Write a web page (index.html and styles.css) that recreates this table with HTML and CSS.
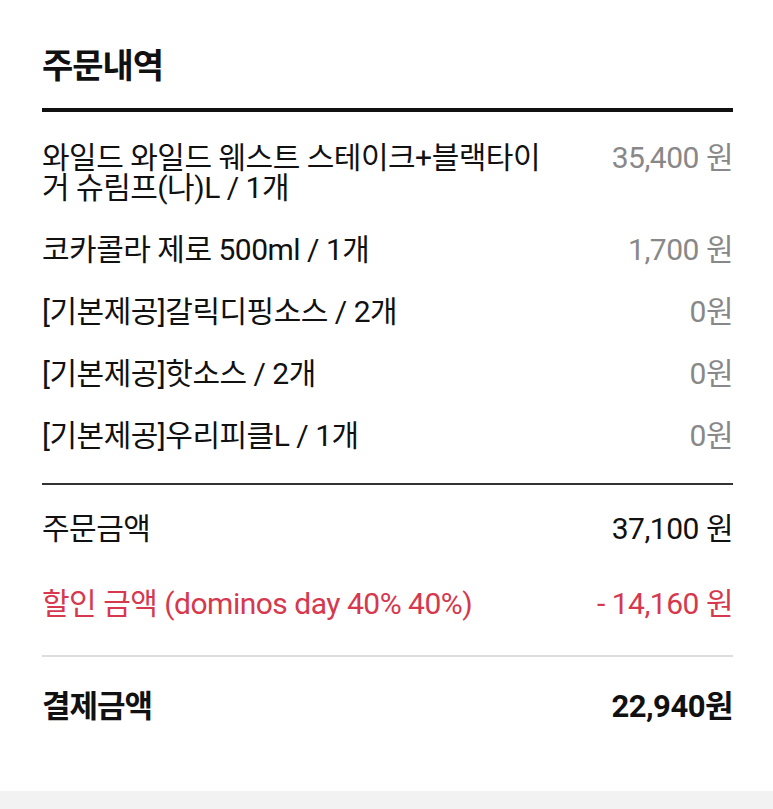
FILE: index.html
```html
<!DOCTYPE html>
<html lang="ko">
<head>
    <meta charset="UTF-8">
    <meta name="viewport" content="width=device-width, initial-scale=1.0">
    <title>주문내역</title>
    <link rel="stylesheet" href="styles.css">
</head>
<body>
    <div class="order">
        <h1 class="order-title">주문내역</h1>

        <ul class="item-list">
            <li class="item">
                <span class="item-name">와일드 와일드 웨스트 스테이크+블랙타이거 슈림프(나)L / 1개</span>
                <span class="item-price">35,400 원</span>
            </li>
            <li class="item">
                <span class="item-name">코카콜라 제로 500ml / 1개</span>
                <span class="item-price">1,700 원</span>
            </li>
            <li class="item">
                <span class="item-name">[기본제공]갈릭디핑소스 / 2개</span>
                <span class="item-price">0원</span>
            </li>
            <li class="item">
                <span class="item-name">[기본제공]핫소스 / 2개</span>
                <span class="item-price">0원</span>
            </li>
            <li class="item">
                <span class="item-name">[기본제공]우리피클L / 1개</span>
                <span class="item-price">0원</span>
            </li>
        </ul>

        <div class="summary">
            <div class="summary-row">
                <span>주문금액</span>
                <span>37,100 원</span>
            </div>
            <div class="summary-row discount">
                <span>할인 금액 (dominos day 40% 40%)</span>
                <span>- 14,160 원</span>
            </div>
        </div>

        <div class="total">
            <span>결제금액</span>
            <span class="total-price">22,940원</span>
        </div>
    </div>
    <div class="bottom-band"></div>
</body>
</html>
```

FILE: styles.css
```css
body {
    margin: 0;
    font-family: Roboto, "Noto Sans CJK KR", sans-serif;
    color: #111;
    background-color: white;
}
.order {
    padding: 0 40px 0 42px;
}
.order-title {
    margin: 0;
    padding-top: 44px;
    padding-bottom: 20px;
    font-size: 34px;
    line-height: 44px;
    font-weight: 700;
    letter-spacing: -1px;
    border-bottom: 4px solid #111;
}
.item-list {
    list-style: none;
    margin: 0;
    padding: 15px 0 0;
    border-bottom: 2px solid #333;
    padding-bottom: 16px;
}
.item {
    display: flex;
    justify-content: space-between;
    align-items: flex-start;
    padding: 16px 0;
    font-size: 30px;
    line-height: 30px;
    letter-spacing: -0.5px;
}
.item-name {
    max-width: 522px;
}
.item-price {
    color: #888;
    white-space: nowrap;
}
.summary {
    padding-top: 3px;
    padding-bottom: 17px;
    border-bottom: 2px solid #ddd;
}
.summary-row {
    display: flex;
    justify-content: space-between;
    align-items: center;
    height: 75px;
    font-size: 30px;
    letter-spacing: -0.5px;
}
.discount {
    color: #d6384e;
}
.total {
    display: flex;
    justify-content: space-between;
    align-items: center;
    padding: 30px 0 64px;
    line-height: 40px;
    font-size: 31px;
    font-weight: 700;
    letter-spacing: -1px;
}
.total-price {
    font-size: 31px;
    letter-spacing: -0.5px;
}
.bottom-band {
    height: 40px;
    background-color: #f2f2f2;
}
```
